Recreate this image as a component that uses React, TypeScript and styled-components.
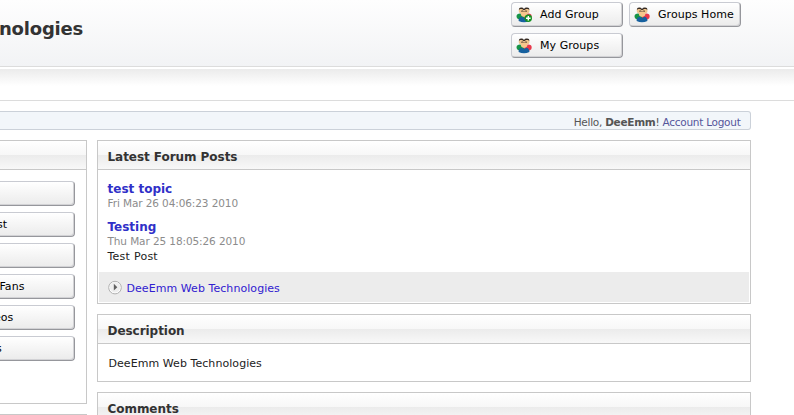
import React from "react";
import styled, { createGlobalStyle } from "styled-components";

const GlobalStyle = createGlobalStyle`
  * { box-sizing: border-box; }
  html, body { margin: 0; background: #fff; overflow: hidden; }
  body { font-family: "DejaVu Sans", Verdana, sans-serif; font-size: 11px; color: #222; }
`;

const Page = styled.div`
  width: 794px;
  height: 415px;
  overflow: hidden;
`;

const Header = styled.header`
  display: flex;
  justify-content: space-between;
  height: 67px;
  border-bottom: 1px solid #dcdcdc;
  background: linear-gradient(#fefefe, #f2f3f5);
`;

const SiteTitle = styled.h1`
  margin: 0 0 0 -1px;
  padding-top: 18px;
  font-size: 18px;
  line-height: 22px;
  letter-spacing: -0.2px;
  color: #333;
  white-space: nowrap;
`;

const HeaderActions = styled.nav`
  display: flex;
  flex-wrap: wrap;
  align-content: flex-start;
  gap: 6px;
  width: 283px;
  padding: 2px 0 0;
`;

const Button = styled.a<{ $wide?: boolean }>`
  display: flex;
  align-items: center;
  gap: 7px;
  flex: none;
  width: ${(p) => (p.$wide ? "auto" : "112px")};
  height: 25px;
  padding: ${(p) => (p.$wide ? "0" : "0 0 0 4px")};
  border: 1px solid;
  border-color: #c9cbd2 #96979c #96979c #c9cbd2;
  border-left-width: ${(p) => (p.$wide ? "0" : "1px")};
  border-radius: ${(p) => (p.$wide ? "0 4px 4px 0" : "4px")};
  box-shadow: inset -1px -1px 0 #d2d2d5;
  background: linear-gradient(#fff, #ebebeb);
  color: #000;
  white-space: nowrap;
`;

const ButtonLabel = styled.span<{ $shift?: number }>`
  margin-left: ${(p) => p.$shift ?? 0}px;
  letter-spacing: 0.05px;
`;

const MenuStrip = styled.div`
  height: 34px;
  border-top: 2px solid #fff;
  border-bottom: 1px solid #dcdcdc;
  background: linear-gradient(#ebebeb, #fff 17px);
`;

const UserBar = styled.div`
  width: 751px;
  height: 19px;
  margin-top: 10px;
  padding-right: 9.5px;
  border: 1px solid #cbd1d9;
  border-left: 0;
  border-radius: 0 3px 3px 0;
  background: #f2f6fa;
  color: #555;
  font-size: 10.5px;
  line-height: 20px;
  letter-spacing: -0.27px;
  text-align: right;
`;

const UserLink = styled.a`
  color: #55559a;
`;

const Columns = styled.main`
  display: grid;
  grid-template-columns: 87px 654px;
  column-gap: 10px;
  margin-top: 10px;
`;

const Column = styled.div`
  display: flex;
  flex-direction: column;
  gap: 10px;
`;

const Panel = styled.section<{ $height: number; $cut?: boolean }>`
  height: ${(p) => p.$height}px;
  border: 1px solid #c8c8c8;
  border-left-width: ${(p) => (p.$cut ? 0 : 1)}px;
`;

const PanelTitle = styled.h2`
  height: 29px;
  margin: 0;
  padding-left: 9.5px;
  border-bottom: 1px solid #c8c8c8;
  background: linear-gradient(#fff, #f7f7f7 50%, #ebebeb 50%, #f8f8f8);
  color: #333;
  font-size: 12px;
  line-height: 32px;
  letter-spacing: -0.05px;
`;

const SideButtons = styled.div`
  display: flex;
  flex-direction: column;
  gap: 6px;
  padding: 11px 11px 0 0;
`;

const Posts = styled.div`
  display: flex;
  flex-direction: column;
  gap: 8px;
  height: 102px;
  padding: 11px 9.5px 0;
`;

const PostTitle = styled.a`
  display: block;
  color: #3030c8;
  font-size: 12px;
  font-weight: bold;
  line-height: 16px;
`;

const PostDate = styled.div`
  color: #8c8c8c;
  font-size: 10.5px;
  line-height: 13px;
  letter-spacing: -0.1px;
  padding-bottom: 1px;
`;

const PostBody = styled.div`
  line-height: 15px;
  letter-spacing: 0.25px;
`;

const PanelFooter = styled.div`
  display: flex;
  align-items: center;
  gap: 4px;
  height: 30px;
  margin: 0 1px;
  padding: 1px 0 0 8.5px;
  background: #ececec;
  color: #3020d0;
  letter-spacing: 0.06px;
  line-height: 15px;
`;

const FooterLink = styled.a`
  padding-top: 2px;
`;

const Description = styled.p`
  margin: 0;
  padding: 12px 10.5px;
  line-height: 16px;
  letter-spacing: 0.06px;
`;

function GroupIcon({ add }: { add?: boolean }) {
  return (
    <svg width="17" height="16" viewBox="0 0 17 16">
      <path d="M0.5 9.5C.5 7.2 2 6.5 4 6.5L8 7V13L3 12.5Q.3 11.5.5 9.5Z" fill="#169447" />
      <path d="M15.7 9.5C15.7 7.2 14.5 6.5 12.5 6.5L8 7V13L13.5 12.5Q16 11.5 15.7 9.5Z" fill="#e8384b" />
      <circle cx="5.2" cy="3.8" r="2.5" fill="#f0c48c" />
      <circle cx="11" cy="3.8" r="2.5" fill="#f0c48c" />
      <path d="M2.8 3Q2.8 .6 5 .6Q7 .4 8 2Q9 .4 11 .6Q13.5 .6 13.3 3L12 1.9H10L8 3.4L6.2 1.9H4.2Z" fill="#362b23" />
      <circle cx="8.1" cy="6.6" r="3.3" fill="#f8c68c" />
      <path d="M5.2 5L5.8 3.3L8.1 4.2L10.4 3.3L11 5L9.8 4.6H6.4Z" fill="#49372a" />
      <path d="M2.6 14C2.5 11 4.2 9.7 5.7 9.7L8 11L10.3 9.7C12 9.7 13.5 11 13.4 14Q8 16.7 2.6 14Z" fill="#17619f" />
      {add && (
        <>
          <circle cx="12.3" cy="11.3" r="3.7" fill="#169323" />
          <path d="M12.3 9V13.6M10 11.3H14.6" stroke="#fff" strokeWidth="1.4" />
        </>
      )}
    </svg>
  );
}

function ArrowIcon() {
  return (
    <svg width="15" height="15" viewBox="0 0 15 15">
      <circle cx="7" cy="7.6" r="6.3" fill="#fff" stroke="#b0b0b0" />
      <circle cx="7" cy="7.2" r="5.2" fill="#eeeeee" />
      <path d="M5.8 3.8V10.6L9.3 7.2Z" fill="#606060" />
    </svg>
  );
}

const sideItems = [
  { label: "", shift: 0 },
  { label: "st", shift: -3 },
  { label: "", shift: 0 },
  { label: "Fans", shift: -0.5 },
  { label: "eos", shift: -6 },
  { label: "s", shift: -4 },
];

export default function App() {
  return (
    <Page>
      <GlobalStyle />
      <Header>
        <SiteTitle>nologies</SiteTitle>
        <HeaderActions>
          <Button><GroupIcon add /><ButtonLabel>Add Group</ButtonLabel></Button>
          <Button><GroupIcon /><ButtonLabel>Groups Home</ButtonLabel></Button>
          <Button><GroupIcon /><ButtonLabel>My Groups</ButtonLabel></Button>
        </HeaderActions>
      </Header>
      <MenuStrip />
      <UserBar>
        Hello, <b>DeeEmm</b>! <UserLink>Account</UserLink> <UserLink>Logout</UserLink>
      </UserBar>
      <Columns>
        <Column>
          <Panel $height={264} $cut>
            <PanelTitle />
            <SideButtons>
              {sideItems.map((item, i) => (
                <Button $wide key={i}>
                  <ButtonLabel $shift={item.shift}>{item.label}</ButtonLabel>
                </Button>
              ))}
            </SideButtons>
          </Panel>
          <Panel $height={40} $cut />
        </Column>
        <Column>
          <Panel $height={164}>
            <PanelTitle>Latest Forum Posts</PanelTitle>
            <Posts>
              <article>
                <PostTitle>test topic</PostTitle>
                <PostDate>Fri Mar 26 04:06:23 2010</PostDate>
              </article>
              <article>
                <PostTitle>Testing</PostTitle>
                <PostDate>Thu Mar 25 18:05:26 2010</PostDate>
                <PostBody>Test Post</PostBody>
              </article>
            </Posts>
            <PanelFooter><ArrowIcon /><FooterLink>DeeEmm Web Technologies</FooterLink></PanelFooter>
          </Panel>
          <Panel $height={68}>
            <PanelTitle>Description</PanelTitle>
            <Description>DeeEmm Web Technologies</Description>
          </Panel>
          <Panel $height={60}>
            <PanelTitle>Comments</PanelTitle>
          </Panel>
        </Column>
      </Columns>
    </Page>
  );
}
